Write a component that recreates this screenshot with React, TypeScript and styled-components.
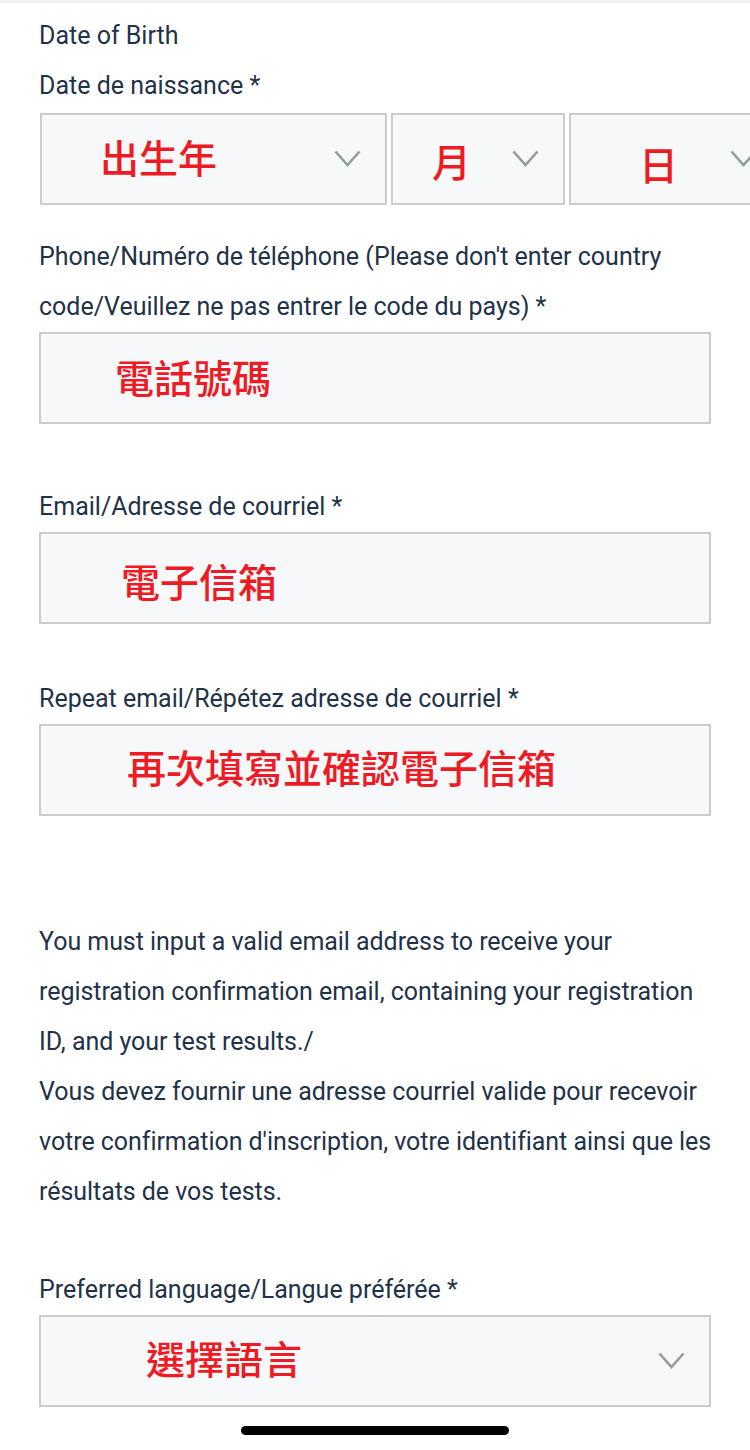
import React from "react";
import styled, { createGlobalStyle } from "styled-components";

const Global = createGlobalStyle`
  html, body { margin: 0; padding: 0; background: #ffffff; }
  body { overflow-x: hidden; font-family: Roboto, "Noto Sans", sans-serif; }
  * { box-sizing: border-box; }
`;

const Page = styled.div`
  width: 750px;
  min-height: 1450px;
  overflow: hidden;
  border-top: 3px solid #f1f1f1;
  padding: 8px 39px 0 39px;
  display: flex;
  flex-direction: column;
`;

const Label = styled.div<{ $mt?: number }>`
  font-family: Roboto, sans-serif;
  font-size: 25px;
  line-height: 50px;
  color: #1f3248;
  margin-top: ${(p) => p.$mt ?? 0}px;
`;

const DateRow = styled.div`
  display: flex;
  gap: 4px;
  margin-top: 2px;
  margin-left: 1px;
  width: 800px;
`;

const Box = styled.div<{ $w?: number; $pl: number }>`
  position: relative;
  height: 92px;
  ${(p) => (p.$w ? `width: ${p.$w}px; flex: none;` : "width: 100%;")}
  background: #f7f8fa;
  border: 2px solid #cccccc;
  display: flex;
  align-items: center;
  padding-left: ${(p) => p.$pl}px;
`;

const RedText = styled.span<{ $dy?: number }>`
  font-family: "Noto Sans CJK TC", "Noto Sans CJK SC", sans-serif;
  font-weight: 500;
  font-size: 39px;
  line-height: 1;
  color: #ee1b24;
  position: relative;
  top: ${(p) => p.$dy ?? 0}px;
`;

const Chevron = styled.svg<{ $left?: number }>`
  position: absolute;
  ${(p) => (p.$left !== undefined ? `left: ${p.$left}px;` : "right: 24px;")}
  top: 50%;
  margin-top: -9px;
  width: 27px;
  height: 17px;
`;

const Paragraph = styled.p`
  margin: 101px -6px 0 0;
  font-family: Roboto, sans-serif;
  font-size: 25px;
  line-height: 50px;
  letter-spacing: -0.05px;
  color: #1f3248;
`;

const HomeBar = styled.div`
  align-self: center;
  width: 268px;
  height: 9px;
  border-radius: 5px;
  background: #000;
  margin: 19px 0 0 -1px;
`;

const Down = ({ left }: { left?: number }) => (
  <Chevron viewBox="0 0 27 17" $left={left}>
    <path d="M1.5 1.5 L13.5 15 L25.5 1.5" fill="none" stroke="#8f9e9e" strokeWidth="2.6" />
  </Chevron>
);

export default function App() {
  return (
    <>
      <Global />
      <Page>
        <Label>Date of Birth</Label>
        <Label>Date de naissance *</Label>
        <DateRow>
          <Box $w={347} $pl={58}>
            <RedText $dy={-3}>出生年</RedText>
            <Down />
          </Box>
          <Box $w={174} $pl={39}>
            <RedText $dy={1}>月</RedText>
            <Down />
          </Box>
          <Box $w={200} $pl={68}>
            <RedText $dy={4}>日</RedText>
            <Down left={159} />
          </Box>
        </DateRow>
        <Label $mt={27}>
          Phone/Numéro de téléphone (Please don't enter country code/Veuillez ne pas entrer le code du pays) *
        </Label>
        <Box $pl={74}>
          <RedText $dy={-2}>電話號碼</RedText>
        </Box>
        <Label $mt={58}>Email/Adresse de courriel *</Label>
        <Box $pl={80}>
          <RedText $dy={2}>電子信箱</RedText>
        </Box>
        <Label $mt={50}>Repeat email/Répétez adresse de courriel *</Label>
        <Box $pl={86}>
          <RedText $dy={-4}>再次填寫並確認電子信箱</RedText>
        </Box>
        <Paragraph>
          You must input a valid email address to receive your registration confirmation email, containing your
          registration ID, and your test results./
          <br />
          Vous devez fournir une adresse courriel valide pour recevoir votre confirmation d'inscription, votre
          identifiant ainsi que les résultats de vos tests.
        </Paragraph>
        <Label $mt={48}>Preferred language/Langue préférée *</Label>
        <Box $pl={105}>
          <RedText $dy={-4}>選擇語言</RedText>
          <Down />
        </Box>
        <HomeBar />
      </Page>
    </>
  );
}
